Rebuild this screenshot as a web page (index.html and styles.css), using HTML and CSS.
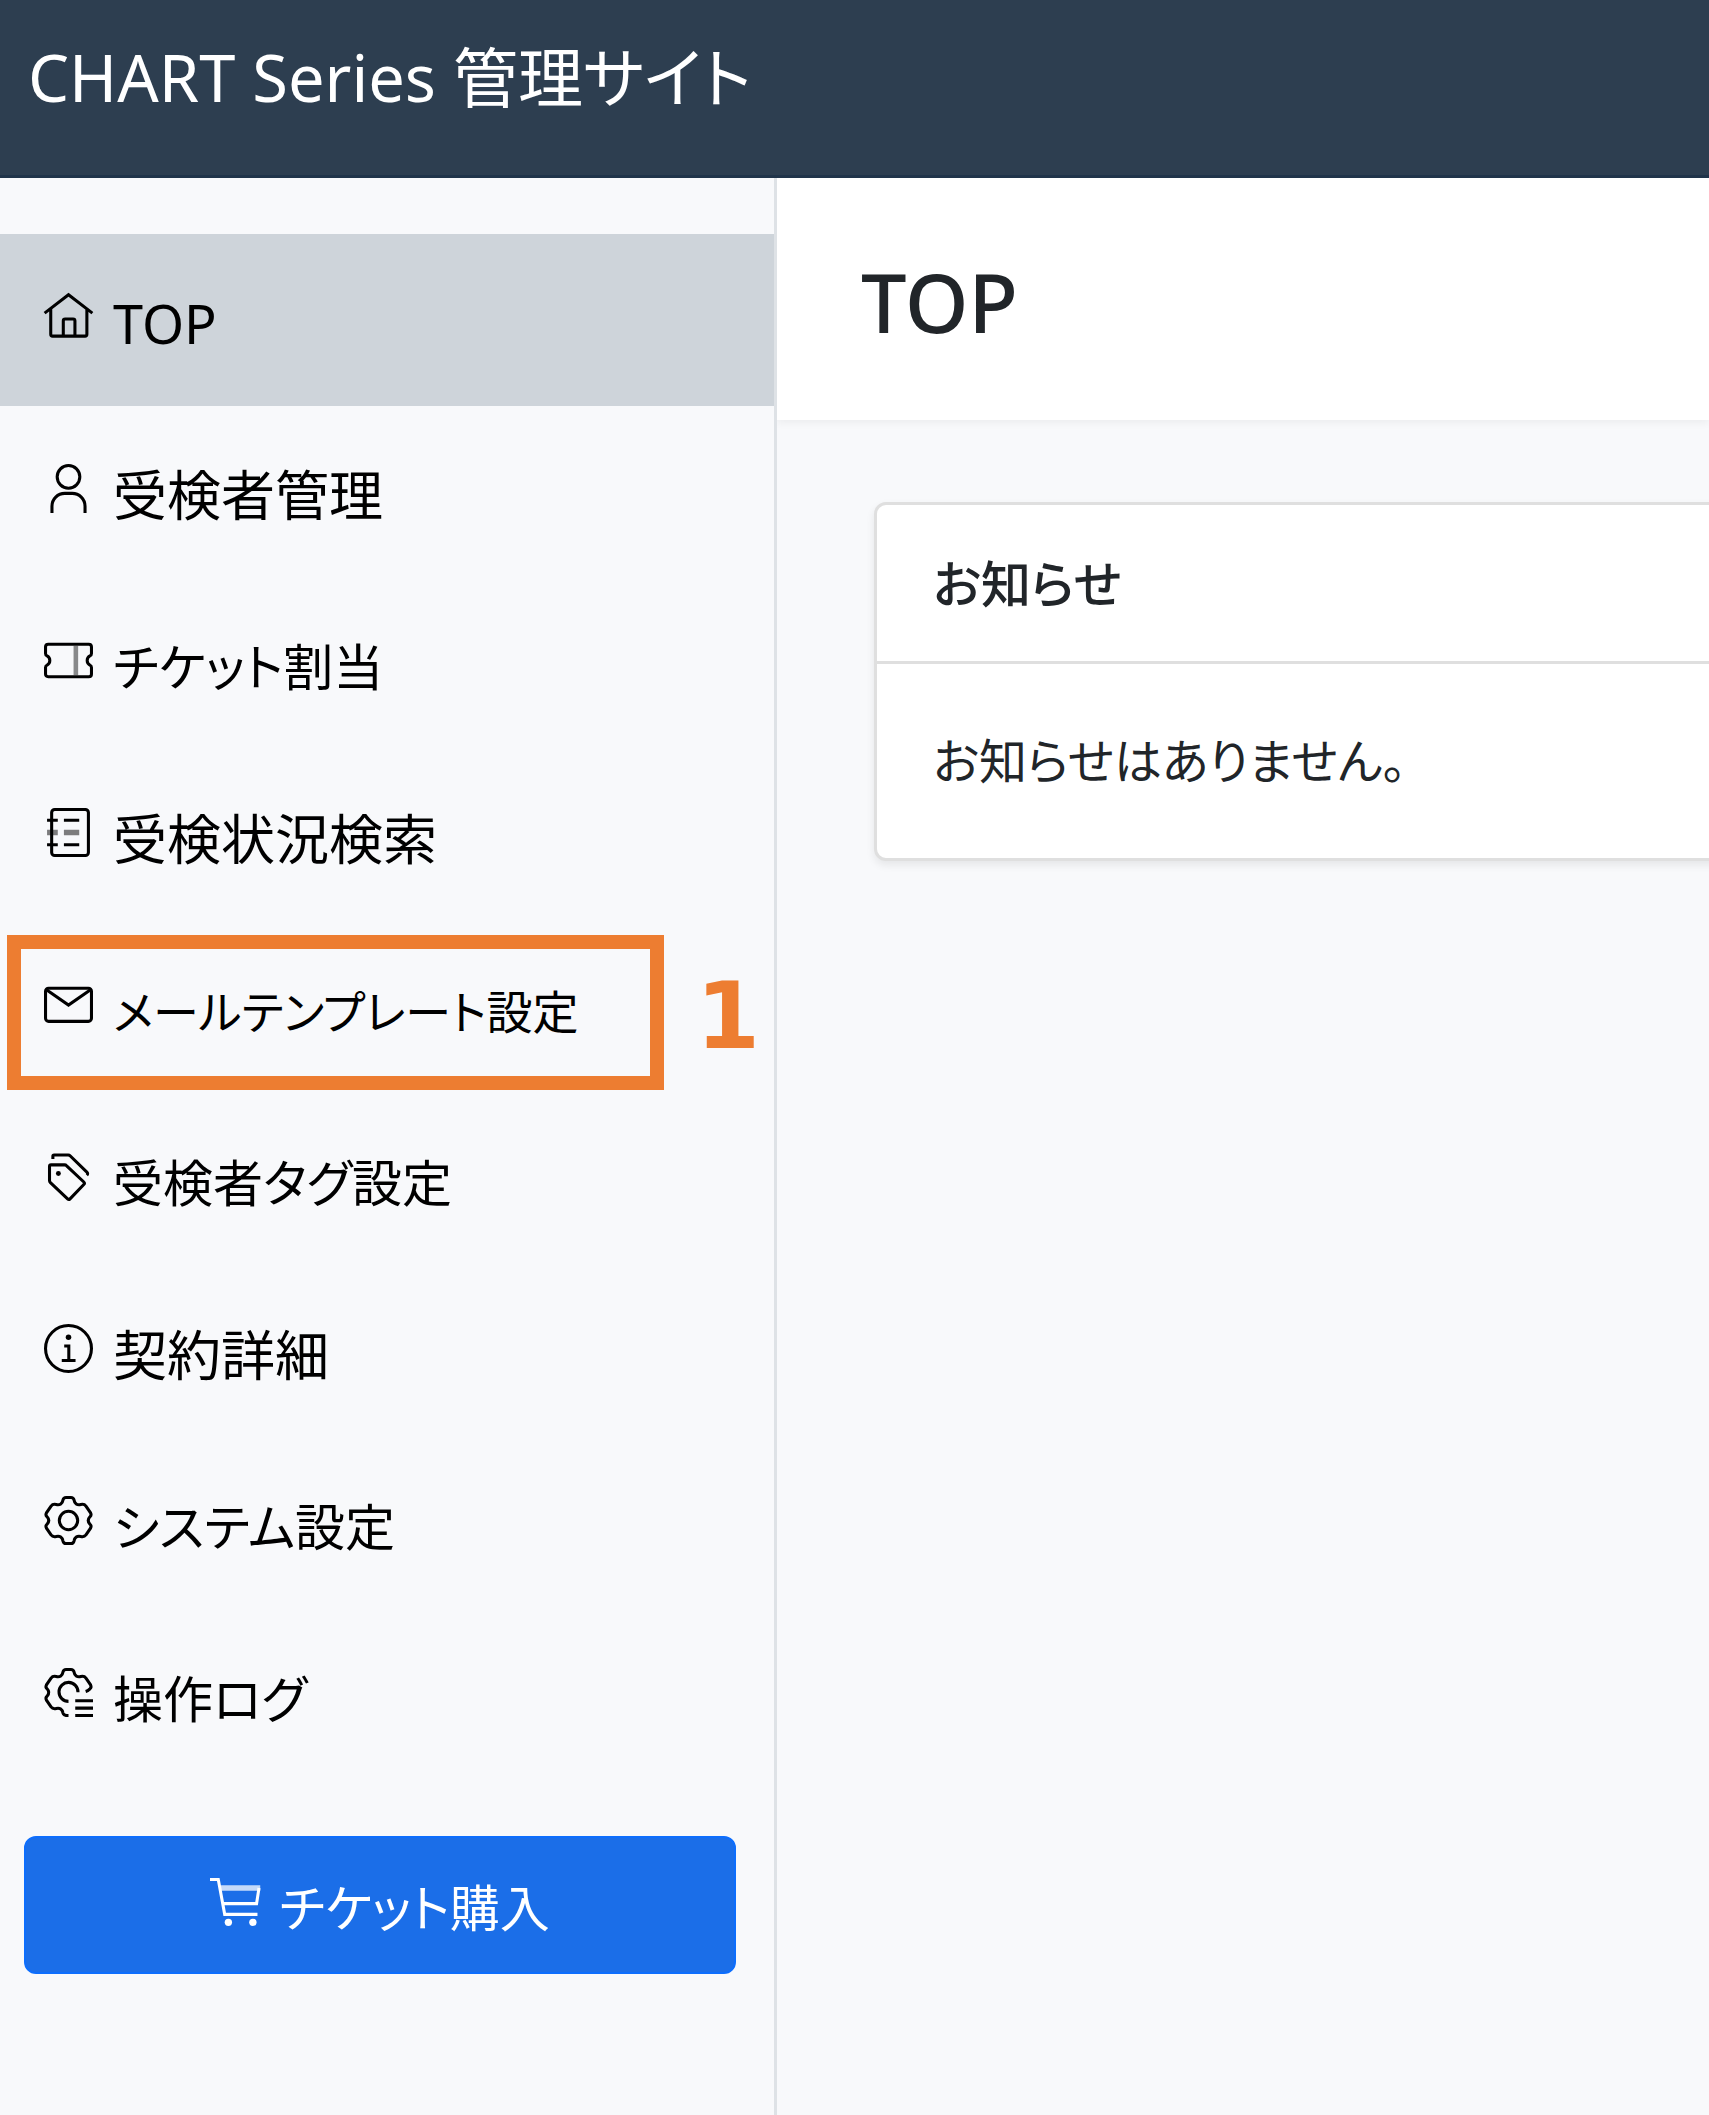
FILE: index.html
```html
<!DOCTYPE html>
<html lang="ja">
<head>
<meta charset="utf-8">
<meta name="viewport" content="width=device-width, initial-scale=1">
<title>CHART Series 管理サイト</title>
<link rel="stylesheet" href="styles.css">
</head>
<body>
<header class="site-header"><a class="brand" href="#">CHART Series 管理サイト</a></header>
<div class="layout">
  <aside class="sidebar">
    <nav>
      <ul class="nav-list">
        <li><a class="nav-link active" href="#" aria-current="page">
          <svg class="icon" viewBox="0 0 16 16" aria-hidden="true"><path d="M.2 6.900L8 .900l7.800 6M2.200 5.600v8.200q0 .6.600.6h10.600q.6 0 .6-.6V5.600M6.300 14.400V9.400q0-.6.600-.6h2.600q.6 0 .6.600v5"/></svg>
          <span class="label">TOP</span></a></li>
        <li><a class="nav-link" href="#">
          <svg class="icon" viewBox="0 0 16 16" aria-hidden="true"><circle cx="8" cy="4.200" r="3.700"/><path d="M2.600 16v-2.200a4.200 4.200 0 0 1 4.200-4.200h2.400a4.200 4.200 0 0 1 4.200 4.200V16"/></svg>
          <span class="label">受検者管理</span></a></li>
        <li><a class="nav-link" href="#">
          <svg class="icon" viewBox="0 0 16 16" aria-hidden="true"><path d="M1.400 2.700h13.200q.9 0 .9.900v2.100q0 .6-.5.800a1.700 1.700 0 0 0 0 3q.5.200.5.800v2.100q0 .9-.9.900H1.400q-.9 0-.9-.9v-2.100q0-.6.500-.8a1.700 1.700 0 0 0 0-3q-.5-.2-.5-.8V3.600q0-.9.900-.9z"/><path d="M10.400 3.200v9.600" stroke-width="1.500" opacity=".45"/></svg>
          <span class="label kana">チケット割当</span></a></li>
        <li><a class="nav-link" href="#">
          <svg class="icon" viewBox="0 0 16 16" aria-hidden="true"><rect x="2.500" y=".5" width="12" height="15" rx="1"/><path d="M1 4h3.500M1 12h3.500M6.500 4h5M6.500 12h5"/><path d="M1 8h3.500M6.500 8h5" stroke-width="1.800" opacity=".5"/></svg>
          <span class="label">受検状況検索</span></a></li>
        <li class="marked"><a class="nav-link" href="#">
          <svg class="icon" viewBox="0 0 16 16" aria-hidden="true"><rect x=".5" y="2.700" width="15" height="10.800" rx="1"/><path d="M.8 3.200L8 8.200l7.200-5"/></svg>
          <span class="label long">メールテンプレート設定</span></a>
          <span class="marker"></span><strong class="marker-number">1</strong></li>
        <li><a class="nav-link" href="#">
          <svg class="icon" viewBox="0 0 16 16" aria-hidden="true"><path d="M1.800 4.700q0-.5.500-.5h4.400q.4 0 .7.300l5.600 5.300q.4.400 0 .8l-4.500 4.700q-.4.400-.8 0L2.100 10q-.3-.3-.3-.7z"/><path d="M2.900 2.300V1.400q0-.4.400-.4h4.600q.4 0 .7.300l5.400 5.300q.5.500 0 1"/><circle class="solid" cx="4.700" cy="7" r=".8"/></svg>
          <span class="label kana">受検者タグ設定</span></a></li>
        <li><a class="nav-link" href="#">
          <svg class="icon" viewBox="0 0 16 16" aria-hidden="true"><circle cx="8" cy="8" r="7.500"/><circle class="solid" cx="8" cy="4.300" r=".9"/><path d="M6.600 7.200H8.100v4.700M5.800 11.900h4.500"/></svg>
          <span class="label">契約詳細</span></a></li>
        <li><a class="nav-link" href="#">
          <svg class="icon" viewBox="0 0 16 16" aria-hidden="true"><path d="M6.200 1.300Q6.400.5 7.200.5H8.800Q9.600.5 9.800 1.300C10 2.500 10.800 3.100 12 2.800Q13.100 2.500 13.700 3.300L15.200 5.500Q15.600 6.300 15 6.800Q13.900 8 15 9.200Q15.600 9.700 15.200 10.500L13.700 12.700Q13.100 13.500 12 13.200C10.800 12.900 10 13.500 9.800 14.700Q9.600 15.500 8.800 15.500H7.200Q6.400 15.500 6.200 14.700C6 13.500 5.200 12.900 4 13.200Q2.900 13.500 2.300 12.700L.8 10.500Q.4 9.700 1 9.200Q2.100 8 1 6.800Q.4 6.300.8 5.500L2.300 3.300Q2.900 2.500 4 2.800C5.200 3.100 6 2.500 6.200 1.300Z"/><circle cx="8" cy="8" r="3"/></svg>
          <span class="label kana">システム設定</span></a></li>
        <li><a class="nav-link" href="#">
          <svg class="icon" viewBox="0 0 16 16" aria-hidden="true"><path d="M13.600 7.700Q14.300 7.500 15 6.800Q15.600 6.300 15.200 5.500L13.700 3.300Q13.100 2.500 12 2.800C10.800 3.100 10 2.500 9.800 1.300Q9.600.5 8.800.5H7.200Q6.400.5 6.200 1.300C6 2.500 5.200 3.100 4 2.800Q2.900 2.500 2.300 3.300L.8 5.500Q.4 6.300 1 6.800Q2.100 8 1 9.200Q.4 9.700.8 10.500L2.300 12.700Q2.900 13.500 4 13.200C5.200 12.900 6 13.500 6.200 14.700Q6.400 15.500 8 15.500"/><path d="M8 10.900A3.100 3.100 0 1 1 11.100 7.900M10.200 10.700H16M10.200 13.100H16M10.200 15.500H16"/></svg>
          <span class="label kana">操作ログ</span></a></li>
      </ul>
    </nav>
    <button class="buy-button" type="button">
      <svg class="icon" viewBox="0 0 16 16" aria-hidden="true"><path d="M0 .8h2.700L4.800 12.200H15.500M4 8.700H15.200L16 3.600"/><path d="M3.500 3.600H16.400" stroke-width="1.800" opacity=".75"/><circle class="solid" cx="6" cy="14.800" r="1.200"/><circle class="solid" cx="14" cy="14.800" r="1.200"/></svg>
      <span class="label kana">チケット購入</span></button>
  </aside>
  <main class="content">
    <div class="page-head"><h1>TOP</h1></div>
    <section class="card">
      <h2 class="card-head">お知らせ</h2>
      <p class="card-body">お知らせはありません。</p>
    </section>
  </main>
</div>
</body>
</html>
```
FILE: styles.css
```css
* {
  box-sizing: border-box;
}

body {
  margin: 0;
  background: #f8f9fb;
  color: #212529;
  font-family: "Noto Sans", "Noto Sans CJK JP", sans-serif;
  font-size: 54px;
  line-height: 82px;
  font-feature-settings: "palt";
}

a {
  color: inherit;
  text-decoration: none;
}

.site-header {
  display: flex;
  height: 178px;
  padding: 26px 28px;
  background: #2d3e50;
  border-bottom: 3px solid #20344a;
}

.brand {
  color: #fff;
  font-size: 65px;
  line-height: 102px;
  white-space: nowrap;
}

.layout {
  display: flex;
  min-height: calc(100vh - 178px);
}

.sidebar {
  flex: 0 0 777px;
  padding-top: 56px;
  border-right: 3px solid #dee2e6;
}

.nav-list {
  margin: 0;
  padding: 0;
  list-style: none;
}

.nav-link {
  display: flex;
  align-items: center;
  gap: 20px;
  height: 172px;
  padding: 0 44px;
  color: #000;
}

.nav-link.active {
  background: #ced4da;
}

.icon {
  flex: none;
  width: 49px;
  height: 49px;
  margin-bottom: 8px;
  overflow: visible;
  fill: none;
  stroke: currentColor;
}

.icon .solid {
  fill: currentColor;
  stroke: none;
}

.label {
  padding-top: 5px;
  white-space: nowrap;
}

.label.kana {
  font-size: 50px;
}

.label.long {
  font-size: 46px;
}

.marked {
  position: relative;
}

.marker {
  position: absolute;
  top: 13px;
  left: 7px;
  width: 657px;
  height: 155px;
  border: 14px solid #ed7d31;
  pointer-events: none;
}

.marker-number {
  position: absolute;
  top: 43px;
  left: 696px;
  color: #ed7d31;
  font: bold 92px/104px "DejaVu Sans", sans-serif;
}

.buy-button {
  display: flex;
  align-items: center;
  justify-content: center;
  gap: 20px;
  width: calc(100% - 62px);
  height: 138px;
  margin: 54px 38px 24px 24px;
  padding: 0;
  border: 2px solid #0d6efd;
  border-radius: 12px;
  background: #1b6ee8;
  color: #fff;
  font: inherit;
  font-feature-settings: inherit;
}

.content {
  flex: 1;
  min-width: 0;
  overflow: hidden;
}

.page-head {
  height: 242px;
  padding: 68px 84px;
  background: #fff;
  box-shadow: 0 3px 8px rgba(0, 0, 0, .05);
}

h1 {
  margin: 0;
  font-size: 81px;
  font-weight: 500;
  line-height: 112px;
}

.card {
  margin: 82px -40px 80px 97px;
  border: 3px solid #dfdfdf;
  border-radius: 12px;
  background: #fff;
  box-shadow: 0 4px 8px rgba(0, 0, 0, .08);
}

.card-head,
.card-body {
  margin: 0;
  padding: 38px 56px 36px;
  font-size: 50px;
}

.card-head {
  border-bottom: 3px solid #dfdfdf;
  font-weight: 500;
}

.card-body {
  padding: 56px;
  font-size: 48px;
}
```
